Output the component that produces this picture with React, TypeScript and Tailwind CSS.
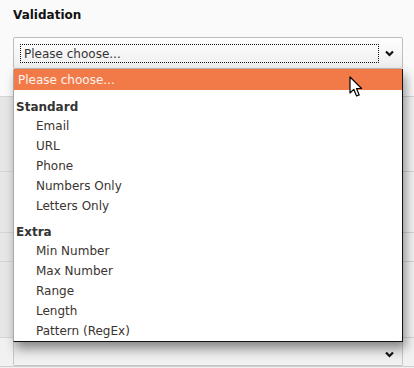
import React from 'react'

const standard = ['Email', 'URL', 'Phone', 'Numbers Only', 'Letters Only']
const extra = ['Min Number', 'Max Number', 'Range', 'Length', 'Pattern (RegEx)']

const Chevron = () => (
  <svg width="9" height="7" viewBox="0 0 9 7" className="block">
    <polyline points="1,1.5 4.5,5 8,1.5" fill="none" stroke="#111" strokeWidth="2.2" />
  </svg>
)

const Cursor = () => (
  <svg width="14" height="22" viewBox="0 0 14 22" className="block">
    <path
      d="M1 1 L1 17 L4.8 13.4 L7.6 20 L10.2 18.9 L7.5 12.5 L12.6 12.5 Z"
      fill="#fff"
      stroke="#000"
      strokeWidth="1.2"
      strokeLinejoin="round"
    />
  </svg>
)

const OptionGroup = ({ label, items, pad }: { label: string; items: string[]; pad: string }) => (
  <div className={pad}>
    <div className="h-[17px] leading-[17px] pl-[2px] font-bold text-[#333]">{label}</div>
    {items.map((item) => (
      <div key={item} className="h-[20px] leading-[20px] pl-[22px] text-[#3a3330]">
        {item}
      </div>
    ))}
  </div>
)

export default function App() {
  return (
    <div className="relative w-[414px] h-[368px] overflow-hidden bg-[#f1f1f1] text-[12px] font-['DejaVu_Sans',sans-serif]">
      {/* Field header */}
      <div className="bg-[#fafafa] px-[13px] pt-[5px]">
        <div className="font-bold leading-[20px] text-[#111]">Validation</div>
        <div className="mt-[12px] h-[32px] w-[390px] rounded-[2px] border border-[#bdbdbd] bg-gradient-to-b from-[#fefefe] to-[#eeeeee] flex items-center pl-[6px] pr-[8px]">
          <div className="h-[19px] w-[359px] border border-dotted border-[#111] flex items-center pl-[3px] pt-[1px] text-[#333]">
            Please choose...
          </div>
          <div className="ml-auto">
            <Chevron />
          </div>
        </div>
      </div>

      {/* Rows behind the open list */}
      <div className="h-[28px] border-b border-[#d4d4d4] bg-[#fafafa]" />
      <div className="h-[75px] border-b border-[#d4d4d4] bg-gradient-to-r from-[#e6e6e6] to-[#f3f3f3]" />
      <div className="h-[61px] border-b border-[#d4d4d4] bg-gradient-to-r from-[#e6e6e6] to-[#f3f3f3]" />
      <div className="h-[29px] border-b border-[#d4d4d4] bg-gradient-to-r from-[#e6e6e6] to-[#f3f3f3]" />
      <div className="h-[76px] border-b border-[#d4d4d4] bg-gradient-to-r from-[#e6e6e6] to-[#f3f3f3]" />
      <div className="px-[13px] border-b border-[#cfcfcf]">
        <div className="h-[28px] w-[390px] border border-t-0 border-[#c6c6c6] rounded-b-[2px] bg-gradient-to-b from-[#dcdcdc] to-[#f3f3f3] flex items-end justify-end pr-[8px] pb-[7px]">
          <Chevron />
        </div>
      </div>

      {/* Open option list */}
      <div className="absolute left-[13px] top-[69px] w-[390px] h-[273px] bg-white border-l border-l-[#a8a8a8] border-r border-r-[#111] border-b border-b-[#111] shadow-[3px_6px_10px_rgba(0,0,0,0.4)]">
        <div className="h-[21px] leading-[23px] bg-[#f27a48] pl-[4px] text-[#fff3ee]">Please choose...</div>
        <OptionGroup label="Standard" items={standard} pad="pt-[9px]" />
        <OptionGroup label="Extra" items={extra} pad="pt-[8px]" />
      </div>

      {/* Mouse pointer */}
      <div className="absolute left-[349px] top-[76px]">
        <Cursor />
      </div>
    </div>
  )
}
